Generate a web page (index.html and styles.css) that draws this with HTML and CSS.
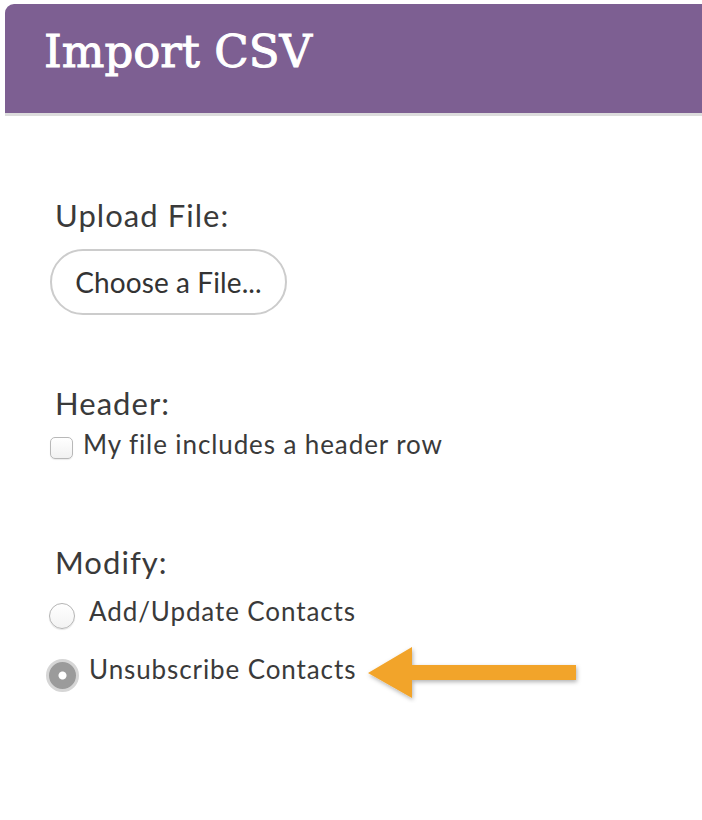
FILE: index.html
```html
<!DOCTYPE html>
<html>
<head>
<meta charset="utf-8">
<link rel="stylesheet" href="styles.css">
</head>
<body>
<header class="topbar">
  <h1 class="title">Import CSV</h1>
</header>
<main class="content">
  <div class="label">Upload File:</div>
  <button class="file-btn" type="button">Choose a File...</button>

  <div class="label label-header">Header:</div>
  <label class="check-row">
    <input class="checkbox" type="checkbox">
    <span class="opt-text">My file includes a header row</span>
  </label>

  <div class="label label-modify">Modify:</div>
  <label class="radio-row radio-row-first">
    <span class="radio-box"><input class="radio" type="radio" name="mod"></span>
    <span class="opt-text">Add/Update Contacts</span>
  </label>
  <label class="radio-row radio-row-second">
    <span class="radio-box"><input class="radio radio-on" type="radio" name="mod" checked></span>
    <span class="opt-text">Unsubscribe Contacts</span>
    <svg class="arrow" width="220" height="58" viewBox="0 0 220 58" aria-hidden="true">
      <defs>
        <filter id="sh" x="-10%" y="-30%" width="120%" height="160%">
          <feDropShadow dx="1" dy="2" stdDeviation="2" flood-color="#000" flood-opacity="0.3"/>
        </filter>
      </defs>
      <polygon points="4,28 48,2 48,20 212,20 212,35 48,35 48,53" fill="#f2a42a" filter="url(#sh)"/>
    </svg>
  </label>
</main>
</body>
</html>
```
FILE: styles.css
```css
html, body {
  margin: 0;
  padding: 0;
  background: #ffffff;
}

body {
  font-family: Lato, "Open Sans", sans-serif;
  color: #3a3a3a;
}

.topbar {
  margin: 4px 0 0 5px;
  height: 109px;
  background: #7d5f92;
  border-top-left-radius: 9px;
  border-bottom: 3px solid #dcdcdc;
  box-sizing: content-box;
  padding: 0 0 0 39px;
}

.title {
  margin: 0;
  padding-top: 25px;
  font-family: "DejaVu Serif", serif;
  font-weight: normal;
  font-size: 45px;
  line-height: 45px;
  letter-spacing: 0;
  color: #ffffff;
  -webkit-text-stroke: 1px #ffffff;
}

.content {
  padding: 81px 0 120px 50px;
}

.label {
  margin-left: 5px;
  font-size: 31px;
  line-height: 36px;
  letter-spacing: 1.05px;
}

.file-btn {
  display: block;
  margin-top: 16px;
  width: 237px;
  height: 66px;
  border: 2px solid #cccccc;
  border-radius: 33px;
  background: #ffffff;
  font-family: Lato, "Open Sans", sans-serif;
  font-size: 28px;
  letter-spacing: 0.1px;
  color: #333333;
  padding: 0;
}

.label-header {
  margin-top: 70px;
}

.check-row {
  display: flex;
  align-items: flex-start;
  gap: 10px;
  margin-top: 8px;
}

.opt-text {
  font-size: 26px;
  line-height: 31px;
  letter-spacing: 0.9px;
}

.checkbox {
  appearance: none;
  -webkit-appearance: none;
  margin: 8px 0 0 0;
  width: 23px;
  height: 22px;
  border: 1px solid #b8b8b8;
  border-radius: 5px;
  background: linear-gradient(#ffffff, #f1f1f1);
  box-sizing: border-box;
  box-shadow: 0 1px 1px rgba(0,0,0,0.08);
}

.label-modify {
  margin-top: 84px;
}

.radio-row {
  display: flex;
  align-items: flex-start;
  gap: 10px;
  margin-left: -5px;
}

.radio-row-first {
  margin-top: 16px;
}

.radio-row-second {
  margin-top: 25px;
}

.radio-box {
  width: 34px;
  display: flex;
  justify-content: center;
}

.radio {
  appearance: none;
  -webkit-appearance: none;
  margin: 7px 0 0 0;
  width: 26px;
  height: 26px;
  border-radius: 50%;
  border: 1px solid #b5b5b5;
  background: linear-gradient(#ffffff, #f3f3f3);
  box-sizing: border-box;
  box-shadow: 0 1px 1px rgba(0,0,0,0.1);
}

.radio.radio-on {
  margin-top: 5px;
  width: 33px;
  height: 33px;
  border: 3px solid #d6d6d6;
  background: radial-gradient(circle, #ffffff 0, #ffffff 3.5px, #9b9b9b 4.5px, #9b9b9b 100%);
  box-shadow: none;
}

.arrow {
  flex: none;
  margin: -9px 0 0 -2px;
}
```
